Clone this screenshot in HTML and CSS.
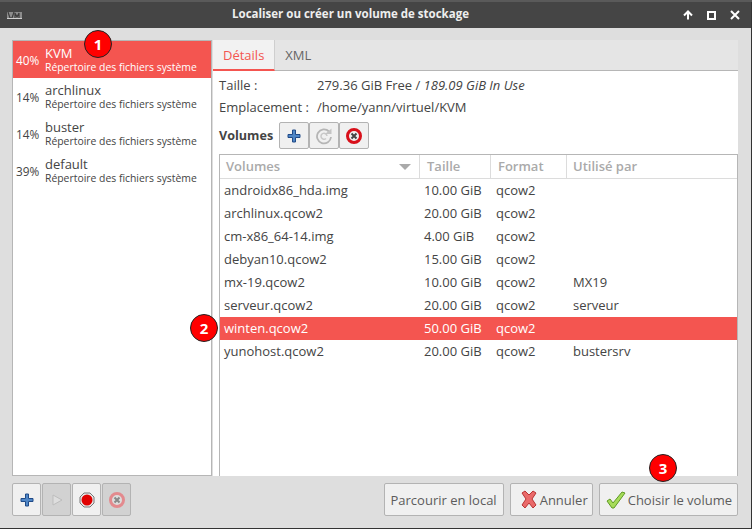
FILE: index.html
```html
<!DOCTYPE html>
<html lang="fr">
<head>
    <meta charset="UTF-8">
    <title>Localiser ou créer un volume de stockage</title>
    <link rel="stylesheet" href="styles.css">
</head>
<body>
    <div class="window">
        <div class="titlebar">
            <svg class="app-icon" width="15" height="7" viewBox="0 0 15 7"><rect width="15" height="7" fill="#8c8c8c"/><path d="M1 0l2 6h2l2-6M8 6V1l2 4 2-4v5" fill="none" stroke="#3c3c3c" stroke-width="1.200"/><path d="M0 6.500h15" stroke="#d0d0d0"/></svg>
            <div class="title">Localiser ou créer un volume de stockage</div>
            <div class="win-btns">
                <svg width="10" height="10" viewBox="0 0 10 10"><path d="M5 9.500V2M1 5.500L5 1.500l4 4" fill="none" stroke="#fff" stroke-width="2"/></svg>
                <svg width="9" height="9" viewBox="0 0 9 9"><rect x="1" y="1" width="7" height="7" fill="none" stroke="#fff" stroke-width="2"/></svg>
                <svg width="10" height="10" viewBox="0 0 10 10"><path d="M1 1l8 8M9 1l-8 8" fill="none" stroke="#fff" stroke-width="2"/></svg>
            </div>
        </div>

        <div class="content">
            <div class="panes">
                <ul class="pools">
                    <li class="pool selected"><span class="pct">40%</span><div><div class="pool-name">KVM</div><div class="pool-type">Répertoire des fichiers système</div></div></li>
                    <li class="pool"><span class="pct">14%</span><div><div class="pool-name">archlinux</div><div class="pool-type">Répertoire des fichiers système</div></div></li>
                    <li class="pool"><span class="pct">14%</span><div><div class="pool-name">buster</div><div class="pool-type">Répertoire des fichiers système</div></div></li>
                    <li class="pool"><span class="pct">39%</span><div><div class="pool-name">default</div><div class="pool-type">Répertoire des fichiers système</div></div></li>
                </ul>

                <div class="notebook">
                    <div class="tabs">
                        <div class="tab active">Détails</div>
                        <div class="tab">XML</div>
                    </div>
                    <div class="page">
                        <div class="info"><span class="info-label">Taille :</span><span>279.36 GiB Free / <em>189.09 GiB In Use</em></span></div>
                        <div class="info"><span class="info-label">Emplacement :</span><span>/home/yann/virtuel/KVM</span></div>
                        <div class="vol-bar">
                            <strong>Volumes</strong>
                            <div class="btn-group">
                                <button class="tool"><svg width="16" height="16" viewBox="0 0 16 16"><path d="M6.500 2h3v4.500H14v3H9.500V14h-3V9.500H2v-3h4.500z" fill="#4f86c6" stroke="#204a87"/></svg></button>
                                <button class="tool"><svg width="18" height="18" viewBox="0 0 18 18"><path d="M14 4.500A7 7 0 1 0 16 10" fill="#f0f0f0" stroke="#b5b5b5" stroke-width="1.800"/><path d="M12 9a3 3 0 1 0-1 2.500" fill="none" stroke="#c8c8c8" stroke-width="1.500"/><path d="M10 7h6.500V1.500z" fill="#c4c4c4"/></svg></button>
                                <button class="tool"><svg width="18" height="18" viewBox="0 0 18 18"><circle cx="9" cy="9" r="6.500" fill="#eee" stroke="#d8101a" stroke-width="3"/><path d="M6.500 6.500l5 5M11.500 6.500l-5 5" stroke="#444" stroke-width="2"/></svg></button>
                            </div>
                        </div>
                        <div class="table">
                            <div class="row head">
                                <div class="col-name">Volumes<span class="sort"></span></div>
                                <div class="col-size">Taille</div>
                                <div class="col-format">Format</div>
                                <div class="col-used">Utilisé par</div>
                            </div>
                            <div class="row"><div class="col-name">androidx86_hda.img</div><div class="col-size">10.00 GiB</div><div class="col-format">qcow2</div><div class="col-used"></div></div>
                            <div class="row"><div class="col-name">archlinux.qcow2</div><div class="col-size">20.00 GiB</div><div class="col-format">qcow2</div><div class="col-used"></div></div>
                            <div class="row"><div class="col-name">cm-x86_64-14.img</div><div class="col-size">4.00 GiB</div><div class="col-format">qcow2</div><div class="col-used"></div></div>
                            <div class="row"><div class="col-name">debyan10.qcow2</div><div class="col-size">15.00 GiB</div><div class="col-format">qcow2</div><div class="col-used"></div></div>
                            <div class="row"><div class="col-name">mx-19.qcow2</div><div class="col-size">10.00 GiB</div><div class="col-format">qcow2</div><div class="col-used">MX19</div></div>
                            <div class="row"><div class="col-name">serveur.qcow2</div><div class="col-size">20.00 GiB</div><div class="col-format">qcow2</div><div class="col-used">serveur</div></div>
                            <div class="row selected"><div class="col-name">winten.qcow2</div><div class="col-size">50.00 GiB</div><div class="col-format">qcow2</div><div class="col-used"></div></div>
                            <div class="row"><div class="col-name">yunohost.qcow2</div><div class="col-size">20.00 GiB</div><div class="col-format">qcow2</div><div class="col-used">bustersrv</div></div>
                        </div>
                    </div>
                </div>
            </div>

            <div class="actions">
                <div class="btn-group spaced">
                    <button class="tool big"><svg width="16" height="16" viewBox="0 0 16 16"><path d="M6.500 2h3v4.500H14v3H9.500V14h-3V9.500H2v-3h4.500z" fill="#4f86c6" stroke="#204a87"/></svg></button>
                    <button class="tool big off"><svg width="14" height="14" viewBox="0 0 14 14"><path d="M3 2l9 5-9 5z" fill="#dedede" stroke="#bdbdbd"/></svg></button>
                    <button class="tool big"><svg width="16" height="16" viewBox="0 0 16 16"><path d="M5 1h6l4 4v6l-4 4H5l-4-4V5z" fill="#e8e8e8" stroke="#777"/><circle cx="8" cy="8" r="5.500" fill="#e00000"/></svg></button>
                    <button class="tool big off"><svg width="18" height="18" viewBox="0 0 18 18"><circle cx="9" cy="9" r="6.500" fill="#ddd" stroke="#e38a8e" stroke-width="3"/><path d="M6.500 6.500l5 5M11.500 6.500l-5 5" stroke="#888" stroke-width="2"/></svg></button>
                </div>
                <button class="action">Parcourir en local</button>
                <button class="action cancel"><svg width="18" height="20" viewBox="0 0 18 20"><path d="M2 3l3-2 4 4 4-4 3 2-4 6 4 6-3 3-4-5-4 5-3-3 4-6z" fill="#ea6a6a" stroke="#b83434"/></svg>Annuler</button>
                <button class="action choose"><svg width="20" height="18" viewBox="0 0 20 18"><path d="M1 10l3-2 3 4 9-11 3 1-11 15H6z" fill="#a6dc5a" stroke="#5f9a24"/></svg>Choisir le volume</button>
            </div>
        </div>

        <div class="badge badge-1">1</div>
        <div class="badge badge-2">2</div>
        <div class="badge badge-3">3</div>
    </div>
</body>
</html>
```

FILE: styles.css
```css
html, body {
    margin: 0;
    height: 100%;
    overflow: hidden;
}
body {
    font-family: 'Open Sans', sans-serif;
    font-size: 13px;
    color: #444;
    background: #5a5a5a;
}
button {
    font-family: inherit;
    font-size: 13px;
    color: #5c5c5c;
}
.window {
    position: relative;
    height: 527px;
    margin-top: 2px;
    background: #dedede;
    border-right: 1px solid #333;
    border-bottom: 1px solid #333;
    box-sizing: border-box;
    display: flex;
    flex-direction: column;
}
.titlebar {
    height: 26px;
    background: #454545;
    color: #eee;
    display: flex;
    align-items: center;
    padding: 0 11px 0 7px;
    flex-shrink: 0;
}
.title {
    flex: 1;
    text-align: center;
    font-weight: 700;
    font-size: 11.500px;
    padding: 0 4px 3px 0;
}
.win-btns {
    display: flex;
    gap: 14px;
    align-items: center;
}
.content {
    flex: 1;
    padding: 12px 13px 10px 12px;
    display: flex;
    flex-direction: column;
    min-height: 0;
}
.panes {
    height: 436px;
    display: flex;
}
.pools {
    list-style: none;
    margin: 0;
    padding: 0;
    width: 198px;
    background: #fff;
    border: 1px solid #b6b6b6;
    flex-shrink: 0;
}
.pool {
    height: 37px;
    display: flex;
    align-items: center;
    padding-left: 3px;
    color: #444;
}
.pool.selected {
    background: #f45550;
    color: #fff;
}
.pct {
    width: 29px;
    font-size: 11.800px;
}
.pool-name {
    font-size: 13px;
    line-height: 15px;
}
.pool-type {
    font-size: 10.400px;
    line-height: 13px;
}
.notebook {
    flex: 1;
    display: flex;
    flex-direction: column;
    margin-left: 1px;
}
.tabs {
    height: 30px;
    background: #e5e5e5;
    display: flex;
    border-bottom: 1px solid #b6b6b6;
    flex-shrink: 0;
}
.tab {
    padding: 0 10px;
    line-height: 30px;
    color: #666;
}
.tab.active {
    background: #f2f2f2;
    color: #f45550;
    border-bottom: 2px solid #f45550;
    height: 29px;
    border-right: 1px solid #cfcfcf;
}
.page {
    flex: 1;
    background: #fff;
    padding: 3px 0 0 6px;
    display: flex;
    flex-direction: column;
    min-height: 0;
}
.info {
    height: 22px;
    line-height: 22px;
    display: flex;
}
.info-label {
    width: 98px;
}
.info em {
    font-style: italic;
}
.vol-bar {
    display: flex;
    align-items: center;
    gap: 6px;
    height: 27px;
    margin-top: 4px;
    margin-bottom: 5px;
    font-size: 12.600px;
}
.btn-group {
    display: flex;
}
.btn-group.spaced {
    gap: 1px;
    margin-right: auto;
}
.tool {
    width: 30px;
    height: 27px;
    padding: 0;
    margin: 0;
    border: 1px solid #b3b3b3;
    border-radius: 2px;
    background: #f0f0f0;
    display: flex;
    align-items: center;
    justify-content: center;
}
.tool.big {
    width: 29px;
    height: 33px;
}
.tool.off {
    background: #d2d2d2;
}
.table {
    flex: 1;
    border: 1px solid #b6b6b6;
    border-bottom: 0;
}
.row {
    display: flex;
    height: 23px;
    line-height: 23px;
}
.row.head {
    height: 23px;
    font-weight: 600;
    color: #aaa;
    border-bottom: 1px solid #dcdcdc;
}
.row.head > div {
    border-right: 1px solid #dcdcdc;
    box-sizing: border-box;
}
.row.selected {
    background: #f45550;
    color: #fff;
}
.col-name {
    width: 200px;
    padding-left: 6px;
    box-sizing: border-box;
    position: relative;
}
.row:not(.head) .col-name {
    padding-left: 4px;
}
.col-size {
    width: 71px;
    padding-left: 4px;
    box-sizing: border-box;
}
.col-format {
    width: 76px;
    padding-left: 5px;
    box-sizing: border-box;
}
.row.head .col-size,
.row.head .col-format {
    padding-left: 7px;
}
.col-used {
    flex: 1;
    padding-left: 6px;
}
.row.head .col-used {
    border-right: 0;
}
.sort {
    position: absolute;
    right: 8px;
    top: 9px;
    border: 6px solid transparent;
    border-top: 6px solid #aaa;
    border-bottom: 0;
}
.actions {
    display: flex;
    align-items: center;
    gap: 6px;
    margin-top: 7px;
}
.action {
    height: 33px;
    padding: 0 6px;
    border: 1px solid #b3b3b3;
    border-radius: 2px;
    background: #f0f0f0;
    display: flex;
    align-items: center;
    gap: 2px;
}
.cancel {
    padding: 0 4px 0 9px;
}
.choose {
    padding-right: 5px;
}
.badge {
    position: absolute;
    width: 28px;
    height: 28px;
    border-radius: 50%;
    background: #f00;
    border: 1px solid #222;
    box-sizing: border-box;
    color: #fff;
    font-weight: 700;
    font-size: 15px;
    line-height: 26px;
    text-align: center;
}
.badge-1 { left: 84px; top: 28px; }
.badge-2 { left: 190px; top: 312px; }
.badge-3 { left: 649px; top: 452px; }
```
